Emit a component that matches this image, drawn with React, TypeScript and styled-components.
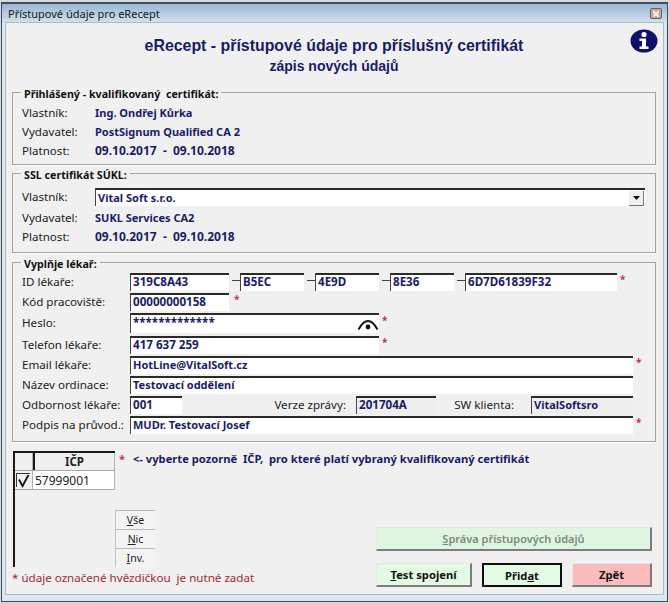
import React from "react";
import styled, { createGlobalStyle } from "styled-components";

const Global = createGlobalStyle`
  html, body { margin: 0; padding: 0; background: #dcdcdc; }
  * { box-sizing: border-box; }
`;

const UI = `"Noto Sans", "Liberation Sans", sans-serif`;
const NAVY = "#1b1b6b";

const Screen = styled.div`
  width: 669px;
  height: 603px;
  padding: 2px 1px 1px 1px;
  background: #d9d9d9;
  font-family: ${UI};
`;
const Win = styled.div`
  height: 100%;
  display: flex;
  flex-direction: column;
  border: 1px solid #3d4c5e;
  border-top-width: 2px;
  background: #dbe7f1;
  padding: 0 4px 7px 4px;
`;
const TitleBar = styled.div`
  height: 19px;
  margin: 0 -4px;
  padding: 0 4px 0 6px;
  flex: none;
  display: flex;
  align-items: center;
  justify-content: space-between;
  background: linear-gradient(#9ab7d2, #d3e2ef);
  font-size: 11px;
  color: #1a1a1a;
`;
const CloseBtn = styled.div`
  width: 12px;
  height: 11px;
  margin-right: 1px;
  border: 1px solid #6f5a5a;
  border-radius: 2px;
  background: #c9a8a0;
  display: flex;
  align-items: center;
  justify-content: center;
`;
const Client = styled.div`
  flex: 1;
  background: #f0f0f0;
  padding: 0 7px 0 6px;
  display: flex;
  flex-direction: column;
  min-height: 0;
  box-shadow: 0 0 0 1px #a9bac9;
`;
const Header = styled.header`
  height: 61px;
  flex: none;
  display: flex;
  flex-direction: column;
  align-items: center;
  padding-top: 14px;
  position: relative;
  color: ${NAVY};
  font-family: "Liberation Sans", Arial, sans-serif;
  font-weight: bold;
`;
const H1 = styled.div`
  font-size: 15.9px;
  line-height: 18px;
`;
const H2 = styled.div`
  font-size: 14px;
  line-height: 16px;
  margin-top: 3px;
`;
const InfoIcon = styled.svg`
  position: absolute;
  right: -2px;
  top: 6px;
`;
const Group = styled.fieldset<{ $h: number; $after?: number }>`
  flex: none;
  margin: 0 0 ${(p) => p.$after ?? 0}px;
  padding: 0 0 0 9px;
  height: ${(p) => p.$h}px;
  border: 1px solid #a3a3a3;
  box-shadow: 0 1px 0 #fff;
  min-width: 0;
`;
const Legend = styled.legend`
  margin-left: -1px;
  padding: 3px 3px 0;
  font-size: 10.7px;
  line-height: 14px;
  font-weight: 700;
  color: #111;
  white-space: pre;
`;
const Row = styled.div<{ $h?: number; $gap?: number }>`
  display: flex;
  align-items: center;
  height: ${(p) => p.$h ?? 19}px;
  margin-top: ${(p) => p.$gap ?? 0}px;
`;
const Label = styled.span<{ $w: number }>`
  width: ${(p) => p.$w}px;
  flex: none;
  margin-top: -2px;
  font-size: 11.6px;
  color: #222;
  white-space: pre;
`;
const Value = styled.span<{ $num?: boolean }>`
  margin-top: -2px;
  font-size: ${(p) => (p.$num ? 12 : 11)}px;
  font-weight: 700;
  color: ${NAVY};
  white-space: pre;
`;
const Field = styled.div<{ $w: number; $gray?: boolean; $h?: number; $num?: boolean }>`
  width: ${(p) => p.$w}px;
  height: ${(p) => p.$h ?? 18}px;
  flex: none;
  position: relative;
  display: flex;
  align-items: center;
  padding: 0 0 3px 2px;
  background: ${(p) => (p.$gray ? "#eeeeee" : "#fff")};
  border-top: 2px solid #2a2a2a;
  border-left: 1px solid #444;
  font-size: ${(p) => (p.$num ? 11.6 : 11)}px;
  font-weight: 700;
  color: ${NAVY};
  white-space: pre;
`;
const Dash = styled.span`
  width: 8px;
  margin-left: 3px;
  flex: none;
  height: 1px;
  margin-top: -3px;
  background: #444;
`;
const Star = styled.span<{ $left?: number }>`
  margin-left: ${(p) => p.$left ?? 3}px;
  margin-top: -6px;
  font-size: 10px;
  font-weight: 700;
  color: #c2344a;
  line-height: 1;
`;
const Combo = styled(Field)`
  justify-content: space-between;
  padding: 0 1px 0 2px;
`;
const ComboText = styled.span`
  margin-top: -2px;
`;
const ComboArrow = styled.div`
  width: 15px;
  height: 15px;
  background: #f0f0f0;
  border-right: 1px solid #777;
  border-bottom: 1px solid #777;
  display: flex;
  align-items: center;
  justify-content: center;
`;
const EyeBtn = styled.svg`
  position: absolute;
  right: 0;
  top: 4px;
`;
const InlineLabel = styled.span<{ $w: number; $pad: number }>`
  width: ${(p) => p.$w}px;
  flex: none;
  margin-top: -2px;
  font-size: 11.6px;
  color: #222;
  text-align: right;
  padding-right: ${(p) => p.$pad}px;
`;

const Lower = styled.div`
  display: grid;
  flex: none;
  grid-template-columns: 102px 40px 221px 276px;
  grid-template-rows: 20px 39px 57px 20px;
  margin: 9px 0 0 1px;
`;
const Table = styled.div`
  grid-row: 1 / 4;
  grid-column: 1;
  border-left: 2px solid #1a1a1a;
`;
const TableRow = styled.div<{ $head?: boolean }>`
  display: grid;
  grid-template-columns: 18px 82px;
  height: ${(p) => (p.$head ? 20 : 19)}px;
  ${(p) => (p.$head ? "border-top: 2px solid #1a1a1a;" : "")}
  border-bottom: 1px solid #a8a8a8;
`;
const HeadCell = styled.div<{ $corner?: boolean }>`
  border-left: ${(p) => (p.$corner ? "0" : "2px solid #1a1a1a")};
  border-right: 1px solid #b0b0b0;
  background: #f0f0f0;
  font-size: 11.5px;
  font-weight: 700;
  color: #222;
  display: flex;
  align-items: center;
  justify-content: center;
`;
const CheckCell = styled.div`
  background: #f0f0f0;
  display: flex;
  align-items: center;
  justify-content: center;
  border-right: 1px solid #b0b0b0;
`;
const DataCell = styled.div`
  background: #fff;
  border-right: 1px solid #b0b0b0;
  font-size: 12px;
  color: #222;
  padding-left: 2px;
  display: flex;
  align-items: center;
`;
const Note = styled.div`
  grid-row: 1;
  grid-column: 2 / 5;
  margin-left: 4px;
  font-size: 11.2px;
  font-weight: 700;
  color: ${NAVY};
  white-space: pre;
`;
const NoteStar = styled.span`
  color: #c2344a;
  margin-right: 2px;
`;
const Side = styled.div`
  grid-row: 3;
  grid-column: 2;
  display: flex;
  flex-direction: column;
`;
const SideBtn = styled.div`
  height: 19px;
  background: #f3f3f3;
  border-top: 1px solid #b8b8b8;
  border-left: 1px solid #c4c4c4;
  font-size: 10.5px;
  color: #222;
  display: flex;
  align-items: center;
  justify-content: center;
`;
const Foot = styled.div`
  grid-row: 4;
  grid-column: 1 / 4;
  margin-left: -1px;
  padding-top: 3px;
  font-size: 11.6px;
  color: #a5283c;
  white-space: pre;
`;
const Actions = styled.div`
  grid-row: 3 / 5;
  grid-column: 4;
  align-self: start;
  margin-top: 17px;
  display: flex;
  flex-direction: column;
  gap: 12px;
`;
const ActionRow = styled.div`
  display: flex;
  gap: 10px;
`;
const Btn = styled.div<{ $w: number; $bg: string; $dark?: boolean; $muted?: boolean }>`
  width: ${(p) => p.$w}px;
  height: 24px;
  background: ${(p) => p.$bg};
  border-top: 1px solid #e8e8e8;
  border-left: 1px solid #e8e8e8;
  border-right: 2px solid #7d7d7d;
  border-bottom: 2px solid #7d7d7d;
  ${(p) => (p.$dark ? "border: 2px solid #111;" : "")}
  font-size: ${(p) => (p.$muted ? 11 : 11.2)}px;
  font-weight: ${(p) => (p.$muted ? 600 : 700)};
  color: ${(p) => (p.$muted ? "#7d8a7d" : "#111")};
  display: flex;
  align-items: center;
  justify-content: center;
  white-space: pre;
`;
const Key = styled.span`
  text-decoration: underline;
`;

export default function App() {
  return (
    <Screen>
      <Global />
      <Win>
        <TitleBar>
          <span>Přístupové údaje pro eRecept</span>
          <CloseBtn>
            <svg width="6" height="6" viewBox="0 0 6 6">
              <path d="M0.5 0.5 5.5 5.5M5.5 0.5 0.5 5.5" stroke="#fff" strokeWidth="1.6" />
            </svg>
          </CloseBtn>
        </TitleBar>
        <Client>
          <Header>
            <H1>eRecept - přístupové údaje pro příslušný certifikát</H1>
            <H2>zápis nových údajů</H2>
            <InfoIcon width="28" height="24" viewBox="0 0 28 24">
              <ellipse cx="14" cy="12" rx="13.5" ry="11.5" fill="#10106a" />
              <circle cx="14" cy="5.5" r="2.6" fill="#fff" />
              <path d="M9.5 9.5h6.5v8h2.5v2.5h-9v-2.5h2.5v-5.5h-2.5z" fill="#fff" />
            </InfoIcon>
          </Header>
          <Group $h={81}>
            <Legend>Přihlášený - kvalifikovaný  certifikát:</Legend>
            <Row $gap={3}><Label $w={73}>Vlastník:</Label><Value>Ing. Ondřej Kůrka</Value></Row>
            <Row><Label $w={73}>Vydavatel:</Label><Value>PostSignum Qualified CA 2</Value></Row>
            <Row><Label $w={73}>Platnost:</Label><Value $num>09.10.2017  -  09.10.2018</Value></Row>
          </Group>
          <Group $h={88} $after={1}>
            <Legend>SSL certifikát SÚKL:</Legend>
            <Row $h={18} $gap={6}>
              <Label $w={73}>Vlastník:</Label>
              <Combo $w={550}>
                <ComboText>Vital Soft s.r.o.</ComboText>
                <ComboArrow>
                  <svg width="7" height="4" viewBox="0 0 7 4"><path d="M0 0h7L3.5 4z" fill="#111" /></svg>
                </ComboArrow>
              </Combo>
            </Row>
            <Row $gap={3}><Label $w={73}>Vydavatel:</Label><Value>SUKL Services CA2</Value></Row>
            <Row><Label $w={73}>Platnost:</Label><Value $num>09.10.2017  -  09.10.2018</Value></Row>
          </Group>
          <Group $h={188}>
            <Legend>Vyplňje lékař:</Legend>
            <Row $h={18} $gap={2}>
              <Label $w={108}>ID lékaře:</Label>
              <Field $w={99} $num>319C8A43</Field><Dash />
              <Field $w={64} $num>B5EC</Field><Dash />
              <Field $w={64} $num>4E9D</Field><Dash />
              <Field $w={64} $num>8E36</Field><Dash />
              <Field $w={152} $num>6D7D61839F32</Field>
              <Star>*</Star>
            </Row>
            <Row $h={18} $gap={2}>
              <Label $w={108}>Kód pracoviště:</Label>
              <Field $w={99} $num>00000000158</Field>
              <Star $left={5}>*</Star>
            </Row>
            <Row $h={20} $gap={2}>
              <Label $w={108}>Heslo:</Label>
              <Field $w={249} $h={20} $num>
                *************
                <EyeBtn width="22" height="12" viewBox="0 0 22 12">
                  <path d="M1.5 10.5C5 4 9 2 11 2S17 4 20.5 10.5" fill="none" stroke="#111" strokeWidth="2" />
                  <circle cx="11" cy="8" r="2.4" fill="#111" />
                </EyeBtn>
              </Field>
              <Star>*</Star>
            </Row>
            <Row $h={18} $gap={3}>
              <Label $w={108}>Telefon lékaře:</Label>
              <Field $w={249} $num>417 637 259</Field>
              <Star>*</Star>
            </Row>
            <Row $h={18} $gap={2}>
              <Label $w={108}>Email lékaře:</Label>
              <Field $w={503}>HotLine@VitalSoft.cz</Field>
              <Star>*</Star>
            </Row>
            <Row $h={18} $gap={2}>
              <Label $w={108}>Název ordinace:</Label>
              <Field $w={503}>Testovací oddělení</Field>
            </Row>
            <Row $h={18} $gap={2}>
              <Label $w={108}>Odbornost lékaře:</Label>
              <Field $w={52} $num>001</Field>
              <InlineLabel $w={174} $pad={10}>Verze zprávy:</InlineLabel>
              <Field $w={80} $gray $num>201704A</Field>
              <InlineLabel $w={95} $pad={17}>SW klienta:</InlineLabel>
              <Field $w={102} $gray>VitalSoftsro</Field>
            </Row>
            <Row $h={18} $gap={2}>
              <Label $w={108}>Podpis na průvod.:</Label>
              <Field $w={503}>MUDr. Testovací Josef</Field>
              <Star>*</Star>
            </Row>
          </Group>
          <Lower>
            <Table>
              <TableRow $head>
                <HeadCell $corner />
                <HeadCell>IČP</HeadCell>
              </TableRow>
              <TableRow>
                <CheckCell>
                  <svg width="15" height="15" viewBox="0 0 15 15">
                    <path d="M0.5 14V0.5H14" fill="none" stroke="#333" />
                    <path d="M3 6.5 6.5 13 12.5 2" fill="none" stroke="#111" strokeWidth="1.8" />
                  </svg>
                </CheckCell>
                <DataCell>57999001</DataCell>
              </TableRow>
            </Table>
            <Note><NoteStar>*</NoteStar>  {"<- vyberte pozorně  IČP,  pro které platí vybraný kvalifikovaný certifikát"}</Note>
            <Side>
              <SideBtn><span><Key>V</Key>še</span></SideBtn>
              <SideBtn><span><Key>N</Key>ic</span></SideBtn>
              <SideBtn><span><Key>I</Key>nv.</span></SideBtn>
            </Side>
            <Foot>* údaje označené hvězdičkou  je nutné zadat</Foot>
            <Actions>
              <Btn $w={276} $bg="#dff5df" $muted><span><Key>S</Key>práva přístupových údajů</span></Btn>
              <ActionRow>
                <Btn $w={96} $bg="#e2fbe2"><span><Key>T</Key>est spojení</span></Btn>
                <Btn $w={80} $bg="#e2fbe2" $dark><span>Přid<Key>a</Key>t</span></Btn>
                <Btn $w={80} $bg="#fbbcbc"><span>Z<Key>p</Key>ět</span></Btn>
              </ActionRow>
            </Actions>
          </Lower>
        </Client>
      </Win>
    </Screen>
  );
}
